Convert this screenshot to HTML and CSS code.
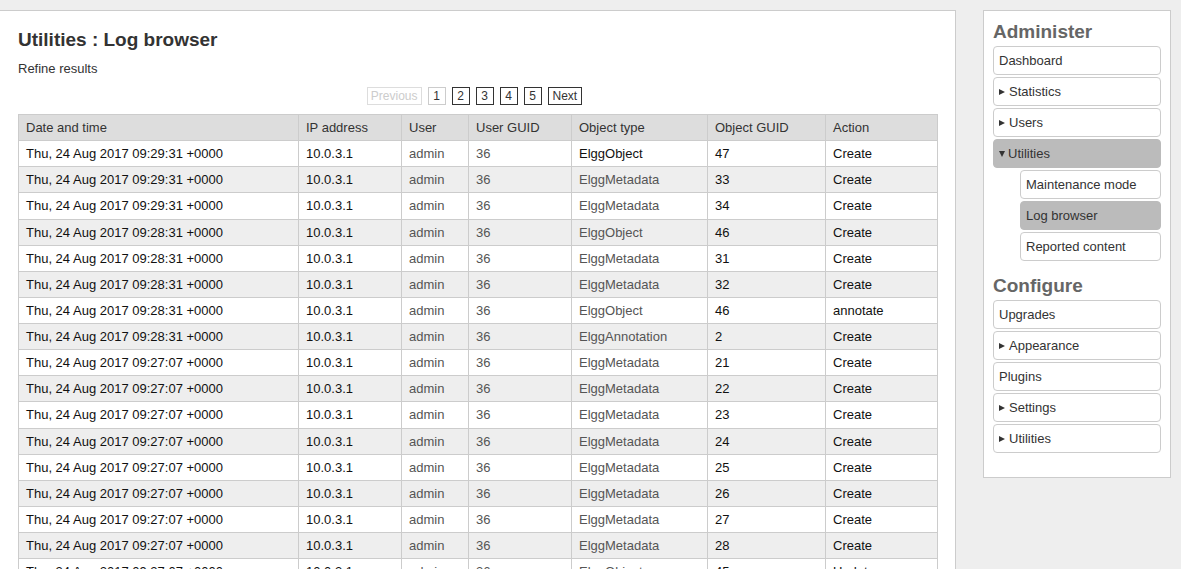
FILE: index.html
```html
<!DOCTYPE html>
<html>
<head>
<meta charset="utf-8">
<link rel="stylesheet" href="styles.css">
</head>
<body>
<div class="page">
  <div class="main">
    <h1 class="title">Utilities : Log browser</h1>
    <div class="refine">Refine results</div>
    <div class="pagination">
      <span class="pg disabled">Previous</span>
      <span class="pg current">1</span>
      <span class="pg">2</span>
      <span class="pg">3</span>
      <span class="pg">4</span>
      <span class="pg">5</span>
      <span class="pg">Next</span>
    </div>
    <table class="log">
      <colgroup>
        <col class="c1"><col class="c2"><col class="c3"><col class="c4"><col class="c5"><col class="c6"><col class="c7">
      </colgroup>
      <thead>
        <tr><th>Date and time</th><th>IP address</th><th>User</th><th>User GUID</th><th>Object type</th><th>Object GUID</th><th>Action</th></tr>
      </thead>
      <tbody>
        <tr><td>Thu, 24 Aug 2017 09:29:31 +0000</td><td>10.0.3.1</td><td class="lnk">admin</td><td class="lnk">36</td><td>ElggObject</td><td>47</td><td>Create</td></tr>
        <tr><td>Thu, 24 Aug 2017 09:29:31 +0000</td><td>10.0.3.1</td><td class="lnk">admin</td><td class="lnk">36</td><td class="lnk">ElggMetadata</td><td>33</td><td>Create</td></tr>
        <tr><td>Thu, 24 Aug 2017 09:29:31 +0000</td><td>10.0.3.1</td><td class="lnk">admin</td><td class="lnk">36</td><td class="lnk">ElggMetadata</td><td>34</td><td>Create</td></tr>
        <tr><td>Thu, 24 Aug 2017 09:28:31 +0000</td><td>10.0.3.1</td><td class="lnk">admin</td><td class="lnk">36</td><td class="lnk">ElggObject</td><td>46</td><td>Create</td></tr>
        <tr><td>Thu, 24 Aug 2017 09:28:31 +0000</td><td>10.0.3.1</td><td class="lnk">admin</td><td class="lnk">36</td><td class="lnk">ElggMetadata</td><td>31</td><td>Create</td></tr>
        <tr><td>Thu, 24 Aug 2017 09:28:31 +0000</td><td>10.0.3.1</td><td class="lnk">admin</td><td class="lnk">36</td><td class="lnk">ElggMetadata</td><td>32</td><td>Create</td></tr>
        <tr><td>Thu, 24 Aug 2017 09:28:31 +0000</td><td>10.0.3.1</td><td class="lnk">admin</td><td class="lnk">36</td><td class="lnk">ElggObject</td><td>46</td><td>annotate</td></tr>
        <tr><td>Thu, 24 Aug 2017 09:28:31 +0000</td><td>10.0.3.1</td><td class="lnk">admin</td><td class="lnk">36</td><td class="lnk">ElggAnnotation</td><td>2</td><td>Create</td></tr>
        <tr><td>Thu, 24 Aug 2017 09:27:07 +0000</td><td>10.0.3.1</td><td class="lnk">admin</td><td class="lnk">36</td><td class="lnk">ElggMetadata</td><td>21</td><td>Create</td></tr>
        <tr><td>Thu, 24 Aug 2017 09:27:07 +0000</td><td>10.0.3.1</td><td class="lnk">admin</td><td class="lnk">36</td><td class="lnk">ElggMetadata</td><td>22</td><td>Create</td></tr>
        <tr><td>Thu, 24 Aug 2017 09:27:07 +0000</td><td>10.0.3.1</td><td class="lnk">admin</td><td class="lnk">36</td><td class="lnk">ElggMetadata</td><td>23</td><td>Create</td></tr>
        <tr><td>Thu, 24 Aug 2017 09:27:07 +0000</td><td>10.0.3.1</td><td class="lnk">admin</td><td class="lnk">36</td><td class="lnk">ElggMetadata</td><td>24</td><td>Create</td></tr>
        <tr><td>Thu, 24 Aug 2017 09:27:07 +0000</td><td>10.0.3.1</td><td class="lnk">admin</td><td class="lnk">36</td><td class="lnk">ElggMetadata</td><td>25</td><td>Create</td></tr>
        <tr><td>Thu, 24 Aug 2017 09:27:07 +0000</td><td>10.0.3.1</td><td class="lnk">admin</td><td class="lnk">36</td><td class="lnk">ElggMetadata</td><td>26</td><td>Create</td></tr>
        <tr><td>Thu, 24 Aug 2017 09:27:07 +0000</td><td>10.0.3.1</td><td class="lnk">admin</td><td class="lnk">36</td><td class="lnk">ElggMetadata</td><td>27</td><td>Create</td></tr>
        <tr><td>Thu, 24 Aug 2017 09:27:07 +0000</td><td>10.0.3.1</td><td class="lnk">admin</td><td class="lnk">36</td><td class="lnk">ElggMetadata</td><td>28</td><td>Create</td></tr>
        <tr><td>Thu, 24 Aug 2017 09:27:07 +0000</td><td>10.0.3.1</td><td class="lnk">admin</td><td class="lnk">36</td><td class="lnk">ElggObject</td><td>45</td><td>Update</td></tr>
      </tbody>
    </table>
  </div>
  <div class="sidebar">
    <h2 class="side-title">Administer</h2>
    <ul class="menu">
      <li class="item">Dashboard</li>
      <li class="item"><span class="arr-right"></span>Statistics</li>
      <li class="item"><span class="arr-right"></span>Users</li>
      <li class="item selected"><span class="arr-down"></span>Utilities</li>
      <li class="item sub">Maintenance mode</li>
      <li class="item sub selected">Log browser</li>
      <li class="item sub">Reported content</li>
    </ul>
    <h2 class="side-title">Configure</h2>
    <ul class="menu">
      <li class="item">Upgrades</li>
      <li class="item"><span class="arr-right"></span>Appearance</li>
      <li class="item">Plugins</li>
      <li class="item"><span class="arr-right"></span>Settings</li>
      <li class="item"><span class="arr-right"></span>Utilities</li>
    </ul>
  </div>
</div>
</body>
</html>
```

FILE: styles.css
```css
html, body {
  margin: 0;
  padding: 0;
  background: #eeeeee;
  font-family: "Liberation Sans", Arial, sans-serif;
  font-size: 13px;
  color: #333333;
}

.page {
  display: flex;
  align-items: flex-start;
  padding-top: 10px;
}

.main {
  box-sizing: border-box;
  width: 956px;
  min-height: 700px;
  background: #ffffff;
  border-top: 1px solid #cccccc;
  border-right: 1px solid #cccccc;
  padding: 18px 0 0 18px;
}

.title {
  margin: 0 0 10px 0;
  font-size: 19px;
  font-weight: bold;
  line-height: 21px;
  color: #333333;
}

.refine {
  line-height: 17px;
  color: #333333;
}

.pagination {
  width: 913px;
  margin-top: 10px;
  display: flex;
  justify-content: center;
  gap: 6px;
}

.pg {
  box-sizing: border-box;
  display: inline-block;
  min-width: 18px;
  height: 18px;
  line-height: 16px;
  padding: 0 4px;
  border: 1px solid #333333;
  font-size: 12px;
  text-align: center;
  color: #333333;
}

.pg.disabled {
  padding: 0 3px;
  border-color: #dddddd;
  color: #cccccc;
}

.pg.current {
  border-color: #cccccc;
  color: #333333;
}

.log {
  margin-top: 9px;
  width: 919px;
  table-layout: fixed;
  border-collapse: collapse;
  border: 1px solid #cccccc;
}

.c1 { width: 280px; }
.c2 { width: 103px; }
.c3 { width: 67px; }
.c4 { width: 103px; }
.c5 { width: 136px; }
.c6 { width: 118px; }
.c7 { width: 112px; }

.log th,
.log td {
  border: 1px solid #cccccc;
  padding: 4px 7px 4px 7px;
  line-height: 17.125px;
  text-align: left;
  white-space: nowrap;
  overflow: hidden;
  font-size: 13px;
}

.log th {
  background: #dddddd;
  font-weight: normal;
  color: #333333;
}

.log td {
  color: #111111;
}

.log td.lnk {
  color: #555555;
}

.log tbody tr:nth-child(even) td {
  background: #eeeeee;
}

.log tbody tr:nth-child(odd) td {
  background: #ffffff;
}

.sidebar {
  box-sizing: border-box;
  width: 188px;
  margin-left: 27px;
  background: #ffffff;
  border: 1px solid #cccccc;
  padding: 10px 9px 10px 9px;
}

.side-title {
  margin: 0 0 4px 0;
  font-size: 19px;
  font-weight: bold;
  line-height: 21px;
  color: #666666;
}

.menu {
  list-style: none;
  margin: 0 0 14px 0;
  padding: 0;
}

.menu + .side-title {
  margin-top: 2px;
}

.item {
  box-sizing: border-box;
  height: 29px;
  margin-bottom: 2px;
  padding: 5px 5px;
  line-height: 17px;
  border: 1px solid #cccccc;
  border-radius: 4px;
  background: #ffffff;
  color: #333333;
  font-size: 13px;
  display: flex;
  align-items: center;
}

.item.sub {
  margin-left: 27px;
}

.item.selected {
  background: #bbbbbb;
  border-color: #bbbbbb;
}

.arr-right {
  display: inline-block;
  width: 0;
  height: 0;
  border-top: 3.5px solid transparent;
  border-bottom: 3.5px solid transparent;
  border-left: 6px solid #333333;
  margin-right: 4px;
}

.arr-down {
  display: inline-block;
  width: 0;
  height: 0;
  border-left: 3.5px solid transparent;
  border-right: 3.5px solid transparent;
  border-top: 6px solid #333333;
  margin-right: 3px;
}
```
